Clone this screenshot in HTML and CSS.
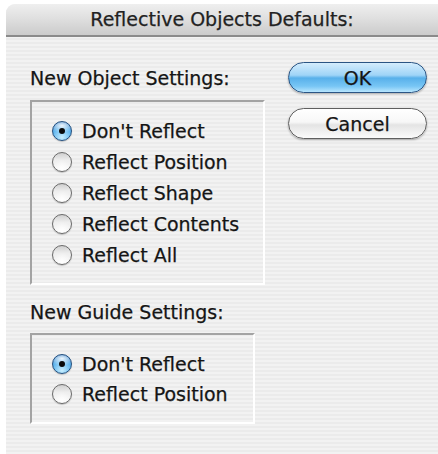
FILE: index.html
```html
<!DOCTYPE html>
<html>
<head>
<meta charset="utf-8">
<title>Reflective Objects Defaults</title>
<link rel="stylesheet" href="styles.css">
</head>
<body>
<div class="window">
  <div class="titlebar">Reflective Objects Defaults:</div>
  <div class="content">
    <div class="settings">
      <div class="label">New Object Settings:</div>
      <div class="group group-object">
        <label class="radio"><span class="knob on"></span>Don't Reflect</label>
        <label class="radio"><span class="knob"></span>Reflect Position</label>
        <label class="radio"><span class="knob"></span>Reflect Shape</label>
        <label class="radio"><span class="knob"></span>Reflect Contents</label>
        <label class="radio"><span class="knob"></span>Reflect All</label>
      </div>
      <div class="label label-guide">New Guide Settings:</div>
      <div class="group group-guide">
        <label class="radio"><span class="knob on"></span>Don't Reflect</label>
        <label class="radio"><span class="knob"></span>Reflect Position</label>
      </div>
    </div>
    <div class="actions">
      <button class="btn btn-default">OK</button>
      <button class="btn">Cancel</button>
    </div>
  </div>
</div>
</body>
</html>
```
FILE: styles.css
```css
html, body {
  margin: 0;
  padding: 0;
  background: #ffffff;
}

body {
  font-family: "DejaVu Sans", "Liberation Sans", sans-serif;
  color: #151515;
  padding: 4px 0 0 6px;
  height: 450px;
  overflow: hidden;
  -webkit-text-stroke: 0.25px currentColor;
}

.window {
  height: 450px;
  border-top-left-radius: 9px;
  overflow: hidden;
  background: repeating-linear-gradient(to bottom, #f2f2f2 0, #f2f2f2 2px, #ebebeb 2px, #ebebeb 4px);
}

.titlebar {
  height: 31px;
  line-height: 31px;
  text-align: center;
  font-size: 19px;
  color: #222222;
  background: linear-gradient(to bottom, #efefef 0%, #e0e0e0 45%, #cbcbcb 100%);
  border-bottom: 2px solid #8a8a8a;
}

.content {
  display: flex;
  align-items: flex-start;
}

.settings {
  padding: 30px 0 0 24px;
}

.label {
  font-size: 19px;
  line-height: 22px;
  margin-bottom: 11px;
}

.label-guide {
  margin-top: 16px;
  margin-bottom: 10px;
}

.group {
  box-sizing: border-box;
  border-top: 2px solid #a3a3a3;
  border-left: 2px solid #a3a3a3;
  border-right: 2px solid #ffffff;
  border-bottom: 2px solid #ffffff;
  padding: 13px 0 0 20px;
}

.group-object {
  width: 235px;
  height: 185px;
}

.group-guide {
  width: 225px;
  height: 91px;
  padding-top: 14px;
}

.radio {
  display: flex;
  align-items: center;
  height: 31px;
  font-size: 19px;
}

.group-guide .radio {
  height: 30px;
}

/* aqua-style radio knob */
.knob {
  box-sizing: border-box;
  width: 20px;
  height: 20px;
  border-radius: 50%;
  margin-right: 10px;
  border: 1px solid #6a6a6a;
  background:
    radial-gradient(circle at 50% 88%, rgba(255,255,255,1) 0, rgba(255,255,255,0) 50%),
    linear-gradient(to bottom, #cfcfcf 0%, #eeeeee 40%, #f7f7f7 100%);
  box-shadow: 0 1px 1px rgba(0,0,0,0.2);
  position: relative;
  -webkit-text-stroke: 0;
}

.knob.on {
  border-color: #24507f;
  background:
    radial-gradient(ellipse 70% 40% at 50% 20%, rgba(255,255,255,0.9) 0, rgba(255,255,255,0) 100%),
    radial-gradient(circle at 50% 85%, #c8efff 0, #5fb5ee 55%, #2468b8 100%);
}

.knob.on::after {
  content: "";
  position: absolute;
  left: 50%;
  top: 50%;
  width: 6px;
  height: 6px;
  margin: -3px 0 0 -3px;
  border-radius: 50%;
  background: #0a0a0a;
}

.actions {
  display: flex;
  flex-direction: column;
  gap: 15px;
  padding: 25px 0 0 23px;
}

.btn {
  box-sizing: border-box;
  width: 139px;
  height: 31px;
  border-radius: 16px;
  font-family: "DejaVu Sans", "Liberation Sans", sans-serif;
  font-size: 19px;
  color: #151515;
  -webkit-text-stroke: 0.25px currentColor;
  padding: 0;
  border: 1px solid #5f5f5f;
  background:
    linear-gradient(to bottom, #ffffff 0%, #f7f7f7 45%, #e4e4e4 55%, #fbfbfb 100%);
  box-shadow: 0 1px 2px rgba(0,0,0,0.3);
}

.btn-default {
  border-color: #2b5584;
  background:
    linear-gradient(to bottom, #d4edfd 0%, #9fd4f7 42%, #58b0ea 52%, #78c6f5 80%, #b8e6fe 100%);
}
```
